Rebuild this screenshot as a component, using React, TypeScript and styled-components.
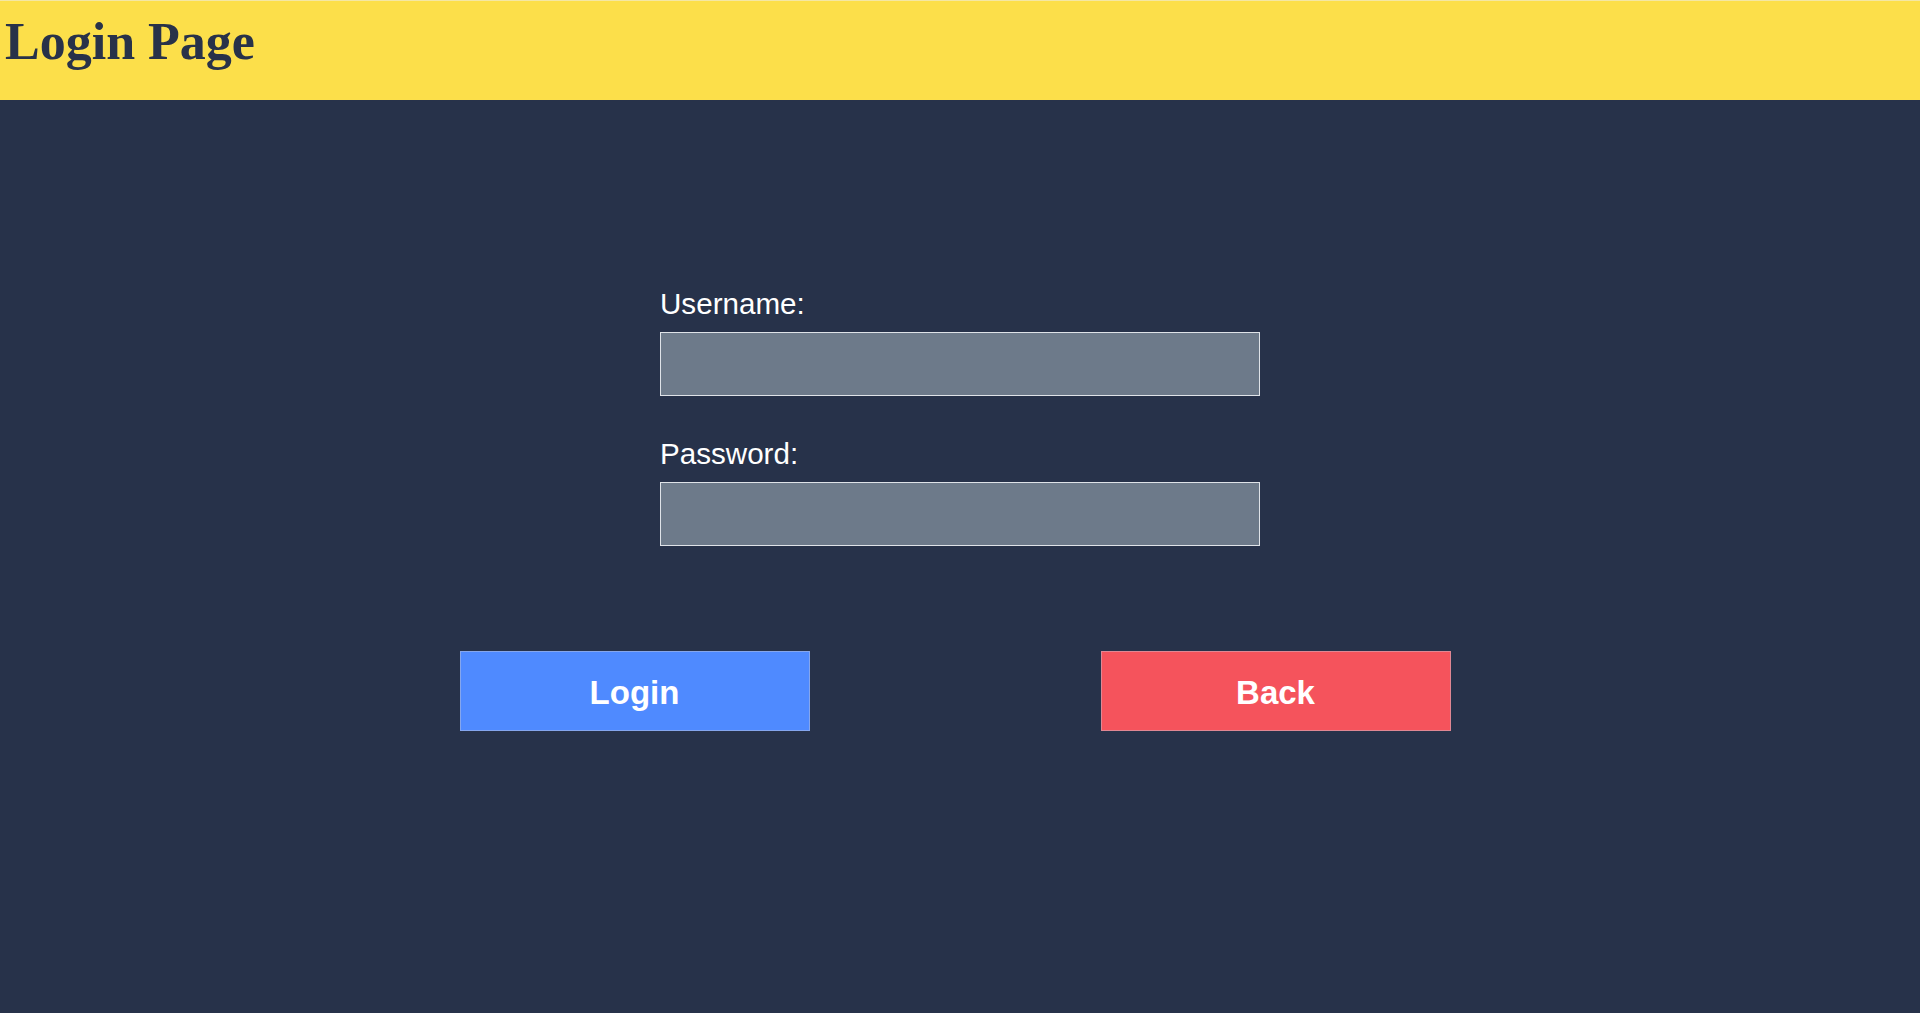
import React from "react";
import styled, { createGlobalStyle } from "styled-components";

const GlobalStyle = createGlobalStyle`
  html, body {
    margin: 0;
    padding: 0;
    background: #27324a;
  }
  body {
    min-height: 100vh;
    font-family: "Liberation Sans", Arial, sans-serif;
  }
  * { box-sizing: border-box; }
`;

const Page = styled.div`
  min-height: 100vh;
  background: #27324a;
  display: flex;
  flex-direction: column;
`;

const Header = styled.header`
  height: 100px;
  background: #fcdf4a;
  border-top: 1px solid #f4e7a4;
  padding: 15px 0 0 5px;
`;

const Title = styled.h1`
  margin: 0;
  font-family: "Liberation Serif", "Times New Roman", serif;
  font-weight: 700;
  font-size: 52px;
  line-height: 1;
  color: #283249;
`;

const Main = styled.main`
  display: flex;
  flex-direction: column;
  align-items: center;
  padding-top: 187px;
`;

const Form = styled.form`
  width: 600px;
  display: flex;
  flex-direction: column;
`;

const Field = styled.div<{ $first?: boolean }>`
  display: flex;
  flex-direction: column;
  margin-top: ${(p) => (p.$first ? "0" : "41px")};
`;

const Label = styled.label`
  font-family: "Liberation Sans", Arial, sans-serif;
  font-size: 29.6px;
  line-height: 33px;
  color: #ffffff;
  margin-bottom: 12px;
`;

const Input = styled.input`
  width: 600px;
  height: 64px;
  background: #6d7a8a;
  border: 1px solid #dfe3e8;
  border-radius: 0;
  outline: none;
  padding: 0 12px;
  font-size: 24px;
  color: #ffffff;
  font-family: "Liberation Sans", Arial, sans-serif;
`;

const ButtonRow = styled.div`
  align-self: stretch;
  display: flex;
  justify-content: center;
  gap: 291px;
  padding-right: 10px;
  margin-top: 105px;
`;

const Button = styled.button<{ $variant: "primary" | "danger" }>`
  width: 350px;
  height: 80px;
  border: 1px solid rgba(200, 200, 215, 0.45);
  border-radius: 0;
  background: ${(p) => (p.$variant === "primary" ? "#4f8aff" : "#f5535c")};
  color: #ffffff;
  font-family: "Liberation Sans", Arial, sans-serif;
  font-weight: 700;
  font-size: 33px;
  cursor: pointer;
  padding: 3px 0 0;
`;

export default function App() {
  return (
    <Page>
      <GlobalStyle />
      <Header>
        <Title>Login Page</Title>
      </Header>
      <Main>
        <Form onSubmit={(e) => e.preventDefault()}>
          <Field $first>
            <Label htmlFor="username">Username:</Label>
            <Input id="username" type="text" />
          </Field>
          <Field>
            <Label htmlFor="password">Password:</Label>
            <Input id="password" type="password" />
          </Field>
        </Form>
        <ButtonRow>
          <Button $variant="primary" type="button">Login</Button>
          <Button $variant="danger" type="button">Back</Button>
        </ButtonRow>
      </Main>
    </Page>
  );
}
